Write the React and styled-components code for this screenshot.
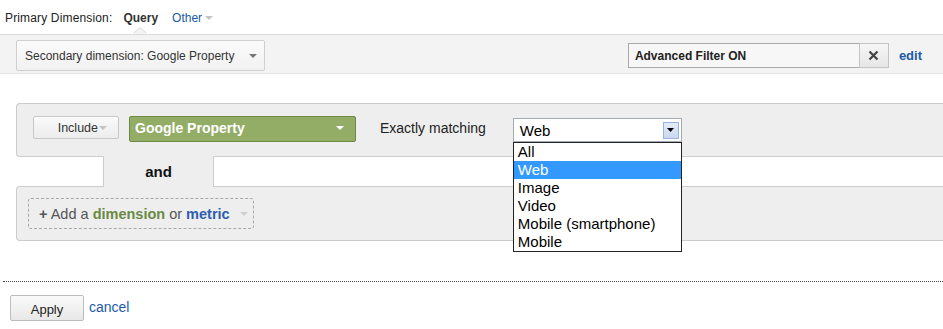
import React from "react";
import styled, { createGlobalStyle } from "styled-components";

const Global = createGlobalStyle`
  html, body { margin: 0; padding: 0; background: #fff; overflow: hidden; }
  body { font-family: "Liberation Sans", Arial, sans-serif; color: #222; }
`;

const Root = styled.div`
  width: 943px;
  height: 329px;
  position: relative;
`;

const PrimaryRow = styled.div`
  height: 34px;
  box-sizing: border-box;
  padding: 1px 0 0 5px;
  display: flex;
  align-items: center;
  font-size: 12px;
`;

const Label = styled.span`
  color: #222;
  margin-right: 11px;
  letter-spacing: 0.15px;
`;

const Current = styled.span`
  position: relative;
  font-weight: bold;
  color: #333;
  margin-right: 14px;
  &::before, &::after {
    content: "";
    position: absolute;
    left: 50%;
    width: 0;
    height: 0;
    border-left: 7px solid transparent;
    border-right: 7px solid transparent;
    margin-left: -8px;
  }
  &::before {
    top: 16px;
    border-bottom: 6px solid #dcdcdc;
  }
  &::after {
    top: 17px;
    border-bottom: 6px solid #f3f3f3;
    z-index: 2;
  }
`;

const LinkText = styled.span`
  color: ${(p) => p.color || "#1c5aa6"};
  font-weight: ${(p) => (p.bold ? "bold" : "normal")};
`;

const Caret = styled.span`
  display: inline-block;
  width: 0;
  height: 0;
  border-left: ${(p) => p.size || 4}px solid transparent;
  border-right: ${(p) => p.size || 4}px solid transparent;
  border-top: ${(p) => p.size || 4}px solid ${(p) => p.color || "#bbb"};
  margin-left: ${(p) => p.gap || 3}px;
  vertical-align: middle;
`;

const Toolbar = styled.div`
  height: 40px;
  box-sizing: border-box;
  background: #f3f3f3;
  border-top: 1px solid #dcdcdc;
  border-bottom: 1px solid #e6e6e6;
  display: flex;
  align-items: flex-start;
  padding: 5px 0 0 16px;
`;

const SecondaryButton = styled.div`
  width: 249px;
  height: 31px;
  box-sizing: border-box;
  border: 1px solid #cfcfcf;
  border-radius: 2px;
  background: linear-gradient(#fbfbfb, #f1f1f1);
  display: flex;
  align-items: center;
  justify-content: space-between;
  padding: 0 7px 0 8px;
  font-size: 12px;
  color: #333;
`;

const FilterGroup = styled.div`
  margin-left: auto;
  margin-right: 21px;
  margin-top: 3px;
  display: flex;
  align-items: center;
`;

const FilterInput = styled.div`
  width: 231px;
  height: 25px;
  box-sizing: border-box;
  border: 1px solid #a9a9a9;
  border-right: none;
  background: #f7f7f7;
  font-size: 12px;
  font-weight: bold;
  color: #222;
  display: flex;
  align-items: center;
  padding-left: 6px;
`;

const ClearButton = styled.div`
  width: 30px;
  height: 25px;
  box-sizing: border-box;
  border: 1px solid #c4c4c4;
  background: linear-gradient(#f6f6f6, #e6e6e6);
  display: flex;
  align-items: center;
  justify-content: center;
  margin-right: 10px;
`;

const EditLink = styled.span`
  color: #1c5aa6;
  font-weight: bold;
  font-size: 13px;
`;

const Builder = styled.div`
  margin-top: 29px;
  padding-left: 16px;
  display: flex;
  flex-direction: column;
`;

const Panel = styled.div`
  background: #eeeeee;
  border: 1px solid #cccccc;
  border-right: none;
  border-radius: 4px 0 0 4px;
  height: ${(p) => p.h}px;
  box-sizing: border-box;
  display: flex;
  align-items: flex-start;
  padding: ${(p) => p.pad};
`;

const IncludeButton = styled.div`
  width: 86px;
  height: 23px;
  box-sizing: border-box;
  border: 1px solid #c8c8c8;
  border-radius: 2px;
  background: linear-gradient(#fafafa, #ececec);
  display: flex;
  align-items: center;
  justify-content: flex-end;
  padding-right: 11px;
  font-size: 12.5px;
  color: #333;
`;

const GreenSelect = styled.div`
  margin-left: 10px;
  width: 227px;
  height: 26px;
  box-sizing: border-box;
  border: 1px solid #6d8a44;
  border-radius: 2px;
  background: #93ad67;
  color: #fff;
  font-weight: bold;
  font-size: 14px;
  display: flex;
  align-items: center;
  justify-content: space-between;
  padding: 0 11px 2px 5px;
`;

const MatchLabel = styled.div`
  margin-left: 24px;
  margin-top: 4px;
  font-size: 14px;
  color: #222;
`;

const SelectWrap = styled.div`
  position: relative;
  margin-left: 27px;
  margin-top: 2px;
`;

const SelectBox = styled.div`
  width: 169px;
  height: 24px;
  box-sizing: border-box;
  border: 1px solid #a5acb2;
  background: #fff;
  display: flex;
  align-items: center;
  justify-content: space-between;
  padding: 0 2px 0 6px;
  font-size: 15px;
  color: #000;
`;

const ArrowBtn = styled.div`
  width: 16px;
  height: 17px;
  box-sizing: border-box;
  border: 1px solid #97b4e0;
  background: linear-gradient(#e4ecf8, #c9d8f0);
  display: flex;
  align-items: center;
  justify-content: center;
`;

const ListBox = styled.ul`
  position: absolute;
  top: 24px;
  left: 0;
  width: 169px;
  box-sizing: border-box;
  margin: 0;
  padding: 0;
  list-style: none;
  border: 1px solid #222;
  background: #fff;
  z-index: 5;
`;

const Option = styled.li`
  height: 18px;
  line-height: 18px;
  padding-left: 4px;
  font-size: 15px;
  color: ${(p) => (p.active ? "#fff" : "#000")};
  background: ${(p) => (p.active ? "#3399ff" : "#fff")};
`;

const Connector = styled.div`
  position: relative;
  z-index: 1;
  margin: -1px 0 -1px 87px;
  width: 111px;
  height: 31px;
  box-sizing: border-box;
  background: #eeeeee;
  border-left: 1px solid #cccccc;
  border-right: 1px solid #cccccc;
  display: flex;
  align-items: center;
  justify-content: center;
  font-weight: bold;
  font-size: 15px;
  color: #111;
`;

const AddButton = styled.div`
  width: 226px;
  height: 31px;
  box-sizing: border-box;
  border: 1px dashed #a8a8a8;
  border-radius: 3px;
  display: flex;
  align-items: center;
  padding-left: 10px;
  font-size: 14.5px;
  color: #555;
  gap: 4px;
`;

const Plus = styled.b`
  color: #555;
`;

const Divider = styled.div`
  margin: 40px 0 0 3px;
  border-top: 1px dotted #444;
`;

const Actions = styled.div`
  margin-top: 13px;
  padding-left: 10px;
  display: flex;
  align-items: center;
  gap: 5px;
`;

const ApplyButton = styled.div`
  width: 74px;
  height: 26px;
  box-sizing: border-box;
  border: 1px solid #bdbdbd;
  border-radius: 2px;
  background: linear-gradient(#fafafa, #e8e8e8);
  display: flex;
  align-items: center;
  justify-content: center;
  font-size: 13px;
  color: #222;
  padding-top: 2px;
`;

const CancelLink = styled.span`
  font-size: 14px;
  color: #1c5aa6;
  margin-top: -3px;
`;

const options = ["All", "Web", "Image", "Video", "Mobile (smartphone)", "Mobile"];

export default function App() {
  return (
    <Root>
      <Global />
      <PrimaryRow>
        <Label>Primary Dimension:</Label>
        <Current>Query</Current>
        <LinkText>
          Other<Caret color="#c4c4c4" gap={3} />
        </LinkText>
      </PrimaryRow>
      <Toolbar>
        <SecondaryButton>
          <span>Secondary dimension: Google Property</span>
          <Caret color="#777" gap={0} />
        </SecondaryButton>
        <FilterGroup>
          <FilterInput>Advanced Filter ON</FilterInput>
          <ClearButton>
            <svg width="11" height="11" viewBox="0 0 11 11">
              <path d="M1.5 1.5 L9.5 9.5 M9.5 1.5 L1.5 9.5" stroke="#444" strokeWidth="2.2" />
            </svg>
          </ClearButton>
          <EditLink>edit</EditLink>
        </FilterGroup>
      </Toolbar>
      <Builder>
        <Panel h={54} pad="12px 0 0 16px">
          <IncludeButton>
            Include<Caret color="#c4c4c4" gap={1} />
          </IncludeButton>
          <GreenSelect>
            <span>Google Property</span>
            <Caret color="#fff" gap={0} />
          </GreenSelect>
          <MatchLabel>Exactly matching</MatchLabel>
          <SelectWrap>
            <SelectBox>
              <span>Web</span>
              <ArrowBtn>
                <svg width="7" height="4" viewBox="0 0 7 4">
                  <path d="M0 0 H7 L3.5 4 Z" fill="#000" />
                </svg>
              </ArrowBtn>
            </SelectBox>
            <ListBox>
              {options.map((o) => (
                <Option key={o} active={o === "Web"}>
                  {o}
                </Option>
              ))}
            </ListBox>
          </SelectWrap>
        </Panel>
        <Connector>and</Connector>
        <Panel h={55} pad="11px 0 0 11px">
          <AddButton>
            <span>
              <Plus>+</Plus> Add a{" "}
              <LinkText bold color="#6b8a45">dimension</LinkText> or{" "}
              <LinkText bold color="#2d5fae">metric</LinkText>
            </span>
            <Caret color="#cfcfcf" gap={6} />
          </AddButton>
        </Panel>
      </Builder>
      <Divider />
      <Actions>
        <ApplyButton>Apply</ApplyButton>
        <CancelLink>cancel</CancelLink>
      </Actions>
    </Root>
  );
}
